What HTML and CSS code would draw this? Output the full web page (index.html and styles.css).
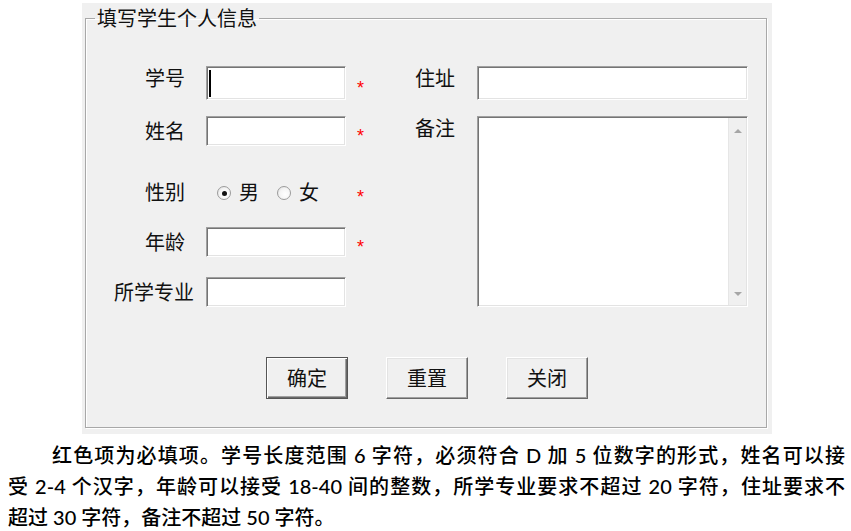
FILE: index.html
```html
<!DOCTYPE html>
<html lang="zh-CN">
<head>
<meta charset="utf-8">
<title>填写学生个人信息</title>
<link rel="stylesheet" href="styles.css">
</head>
<body>
<div class="window">
  <fieldset class="group">
    <legend class="group-title">填写学生个人信息</legend>
    <div class="form">
      <div class="col-left">
        <div class="row row-first">
          <label class="lbl lbl-top">学号</label>
          <span class="tb-wrap"><input class="tb" type="text"><span class="caret"></span></span>
          <span class="star">*</span>
        </div>
        <div class="row row-2">
          <label class="lbl">姓名</label>
          <input class="tb" type="text">
          <span class="star">*</span>
        </div>
        <div class="row row-3">
          <label class="lbl">性别</label>
          <div class="radios">
            <span class="radio checked"></span><span class="opt">男</span>
            <span class="radio radio-2"></span><span class="opt">女</span>
          </div>
          <span class="star">*</span>
        </div>
        <div class="row row-4">
          <label class="lbl">年龄</label>
          <input class="tb" type="text">
          <span class="star">*</span>
        </div>
        <div class="row row-5">
          <label class="lbl lbl-wide">所学专业</label>
          <input class="tb" type="text">
          <span></span>
        </div>
      </div>
      <div class="col-right">
        <div class="rrow rrow-first">
          <label class="lbl lbl-top">住址</label>
          <input class="tb" type="text">
        </div>
        <div class="rrow rrow-memo">
          <label class="lbl lbl-top">备注</label>
          <div class="memo">
            <textarea class="memo-text"></textarea>
            <div class="sb">
              <span class="arr arr-up"></span>
              <span class="arr arr-down"></span>
            </div>
          </div>
        </div>
      </div>
    </div>
    <div class="buttons">
      <button class="btn btn-default" type="button">确定</button>
      <button class="btn" type="button">重置</button>
      <button class="btn" type="button">关闭</button>
    </div>
  </fieldset>
</div>
<p class="note">
  <span class="line line-1">红色项为必填项。学号长度范围 6 字符，必须符合 D 加 5 位数字的形式，姓名可以接</span>
  <span class="line line-2">受 2-4 个汉字，年龄可以接受 18-40 间的整数，所学专业要求不超过 20 字符，住址要求不</span>
  <span class="line">超过 30 字符，备注不超过 50 字符。</span>
</p>
</body>
</html>
```
FILE: styles.css
```css
* { box-sizing: border-box; }
html, body { margin: 0; padding: 0; background: #fff; }
body {
  font-family: "Noto Sans CJK SC", sans-serif;
  color: #000;
}

.window {
  margin: 3px 0 0 82px;
  width: 690px;
  height: 431px;
  background: #f0f0f0;
  padding: 3px 5px 0 3px;
}

.group {
  margin: 0;
  padding: 0;
  width: 682px;
  height: 422px;
  border: 1px solid #a8a8a8;
  box-shadow: inset 1px 1px 0 #fff, 1px 1px 0 #fff;
  min-width: 0;
}

.group-title {
  font-size: 20px;
  line-height: 24px;
  padding: 0 2px;
  margin-left: 9px;
  color: #111;
}

.form {
  display: flex;
  padding: 36px 0 0 28px;
}

.col-left {
  width: 251px;
  display: flex;
  flex-direction: column;
}

.row {
  display: grid;
  grid-template-columns: 92px 140px auto;
  align-items: center;
  height: 30px;
}
.row-first { height: 34px; }
.row-2 { margin-top: 16px; }
.row-3 { margin-top: 31px; }
.row-4 { margin-top: 20px; }
.row-5 { margin-top: 20px; }

.lbl {
  font-size: 20px;
  line-height: 24px;
  padding-left: 31px;
  color: #111;
  white-space: nowrap;
}
.lbl-wide { padding-left: 0; }
.lbl-top { align-self: start; }

.tb {
  display: block;
  width: 100%;
  height: 100%;
  margin: 0;
  padding: 0;
  background: #fff;
  border-style: solid;
  border-width: 1px;
  border-color: #a0a0a0 #fff #fff #a0a0a0;
  box-shadow: inset 1px 1px 0 #747474, inset -1px -1px 0 #e3e3e3;
  outline: none;
}

.tb-wrap {
  position: relative;
  display: block;
  height: 100%;
}
.caret {
  position: absolute;
  left: 3px;
  top: 4px;
  width: 2px;
  height: 27px;
  background: #000;
}

.star {
  color: #f00;
  font-family: "Liberation Sans", sans-serif;
  font-size: 18px;
  line-height: 18px;
  margin-top: 9px;
  margin-left: 11px;
  width: 9px;
}

.radios {
  display: flex;
  align-items: center;
  padding-left: 11px;
  height: 100%;
}
.radio {
  width: 14px;
  height: 14px;
  border-radius: 50%;
  border: 1px solid #9c9c9c;
  background: radial-gradient(circle at 60% 60%, #ffffff 0%, #f4f4f4 55%, #d6d6d6 100%);
  display: flex;
  align-items: center;
  justify-content: center;
  margin-top: 2px;
}
.radio.checked::after {
  content: "";
  width: 5px;
  height: 5px;
  border-radius: 50%;
  background: #111;
}
.radio-2 { margin-left: 18px; }
.opt {
  font-size: 20px;
  line-height: 24px;
  margin-left: 8px;
  color: #111;
}

.col-right {
  margin-left: 50px;
  display: flex;
  flex-direction: column;
}
.rrow {
  display: grid;
  grid-template-columns: 62px 271px;
  height: 34px;
}
.rrow .lbl { padding-left: 0; }
.rrow-memo {
  margin-top: 16px;
  height: 191px;
}

.memo {
  display: flex;
  height: 100%;
  background: #fff;
  border-style: solid;
  border-width: 1px;
  border-color: #a0a0a0 #fff #fff #a0a0a0;
  box-shadow: inset 1px 1px 0 #747474, inset -1px -1px 0 #e3e3e3;
  padding: 1px;
}
.memo-text {
  flex: 1;
  border: none;
  resize: none;
  outline: none;
  overflow: hidden;
  background: #fff;
  margin: 0;
  padding: 0;
}
.sb {
  width: 18px;
  background: #f0f0f0;
  border-left: 1px solid #e6e6e6;
  display: flex;
  flex-direction: column;
  justify-content: space-between;
  align-items: center;
  padding: 11px 0 9px;
}
.arr {
  width: 0;
  height: 0;
  border-left: 4px solid transparent;
  border-right: 4px solid transparent;
}
.arr-up { border-bottom: 4px solid #a6a6a6; }
.arr-down { border-top: 4px solid #a6a6a6; }

.buttons {
  display: flex;
  gap: 38px;
  margin-top: 50px;
  padding-left: 180px;
}
.btn {
  width: 82px;
  height: 42px;
  margin: 0;
  padding: 0;
  font-family: "Noto Sans CJK SC", sans-serif;
  font-size: 20px;
  line-height: 24px;
  color: #111;
  background: #f0f0f0;
  border-style: solid;
  border-width: 1px;
  border-color: #fff #696969 #696969 #fff;
  box-shadow: inset -1px -1px 0 #a0a0a0, inset 1px 1px 0 #e3e3e3;
}
.btn-default {
  border-color: #555;
  box-shadow: inset 1px 1px 0 #fff, inset -1px -1px 0 #696969, inset -2px -2px 0 #a0a0a0;
}

.note {
  margin: 6px 0 0;
  padding: 0 6px 0 8px;
  font-family: Lato, "Noto Sans CJK SC", sans-serif;
  font-size: 20px;
  font-weight: 500;
  line-height: 31px;
  color: #000;
}
.line {
  display: block;
  white-space: nowrap;
}
.line-1, .line-2 {
  text-align: justify;
  text-align-last: justify;
  white-space: normal;
}
.line-1 { text-indent: 44px; }
```
